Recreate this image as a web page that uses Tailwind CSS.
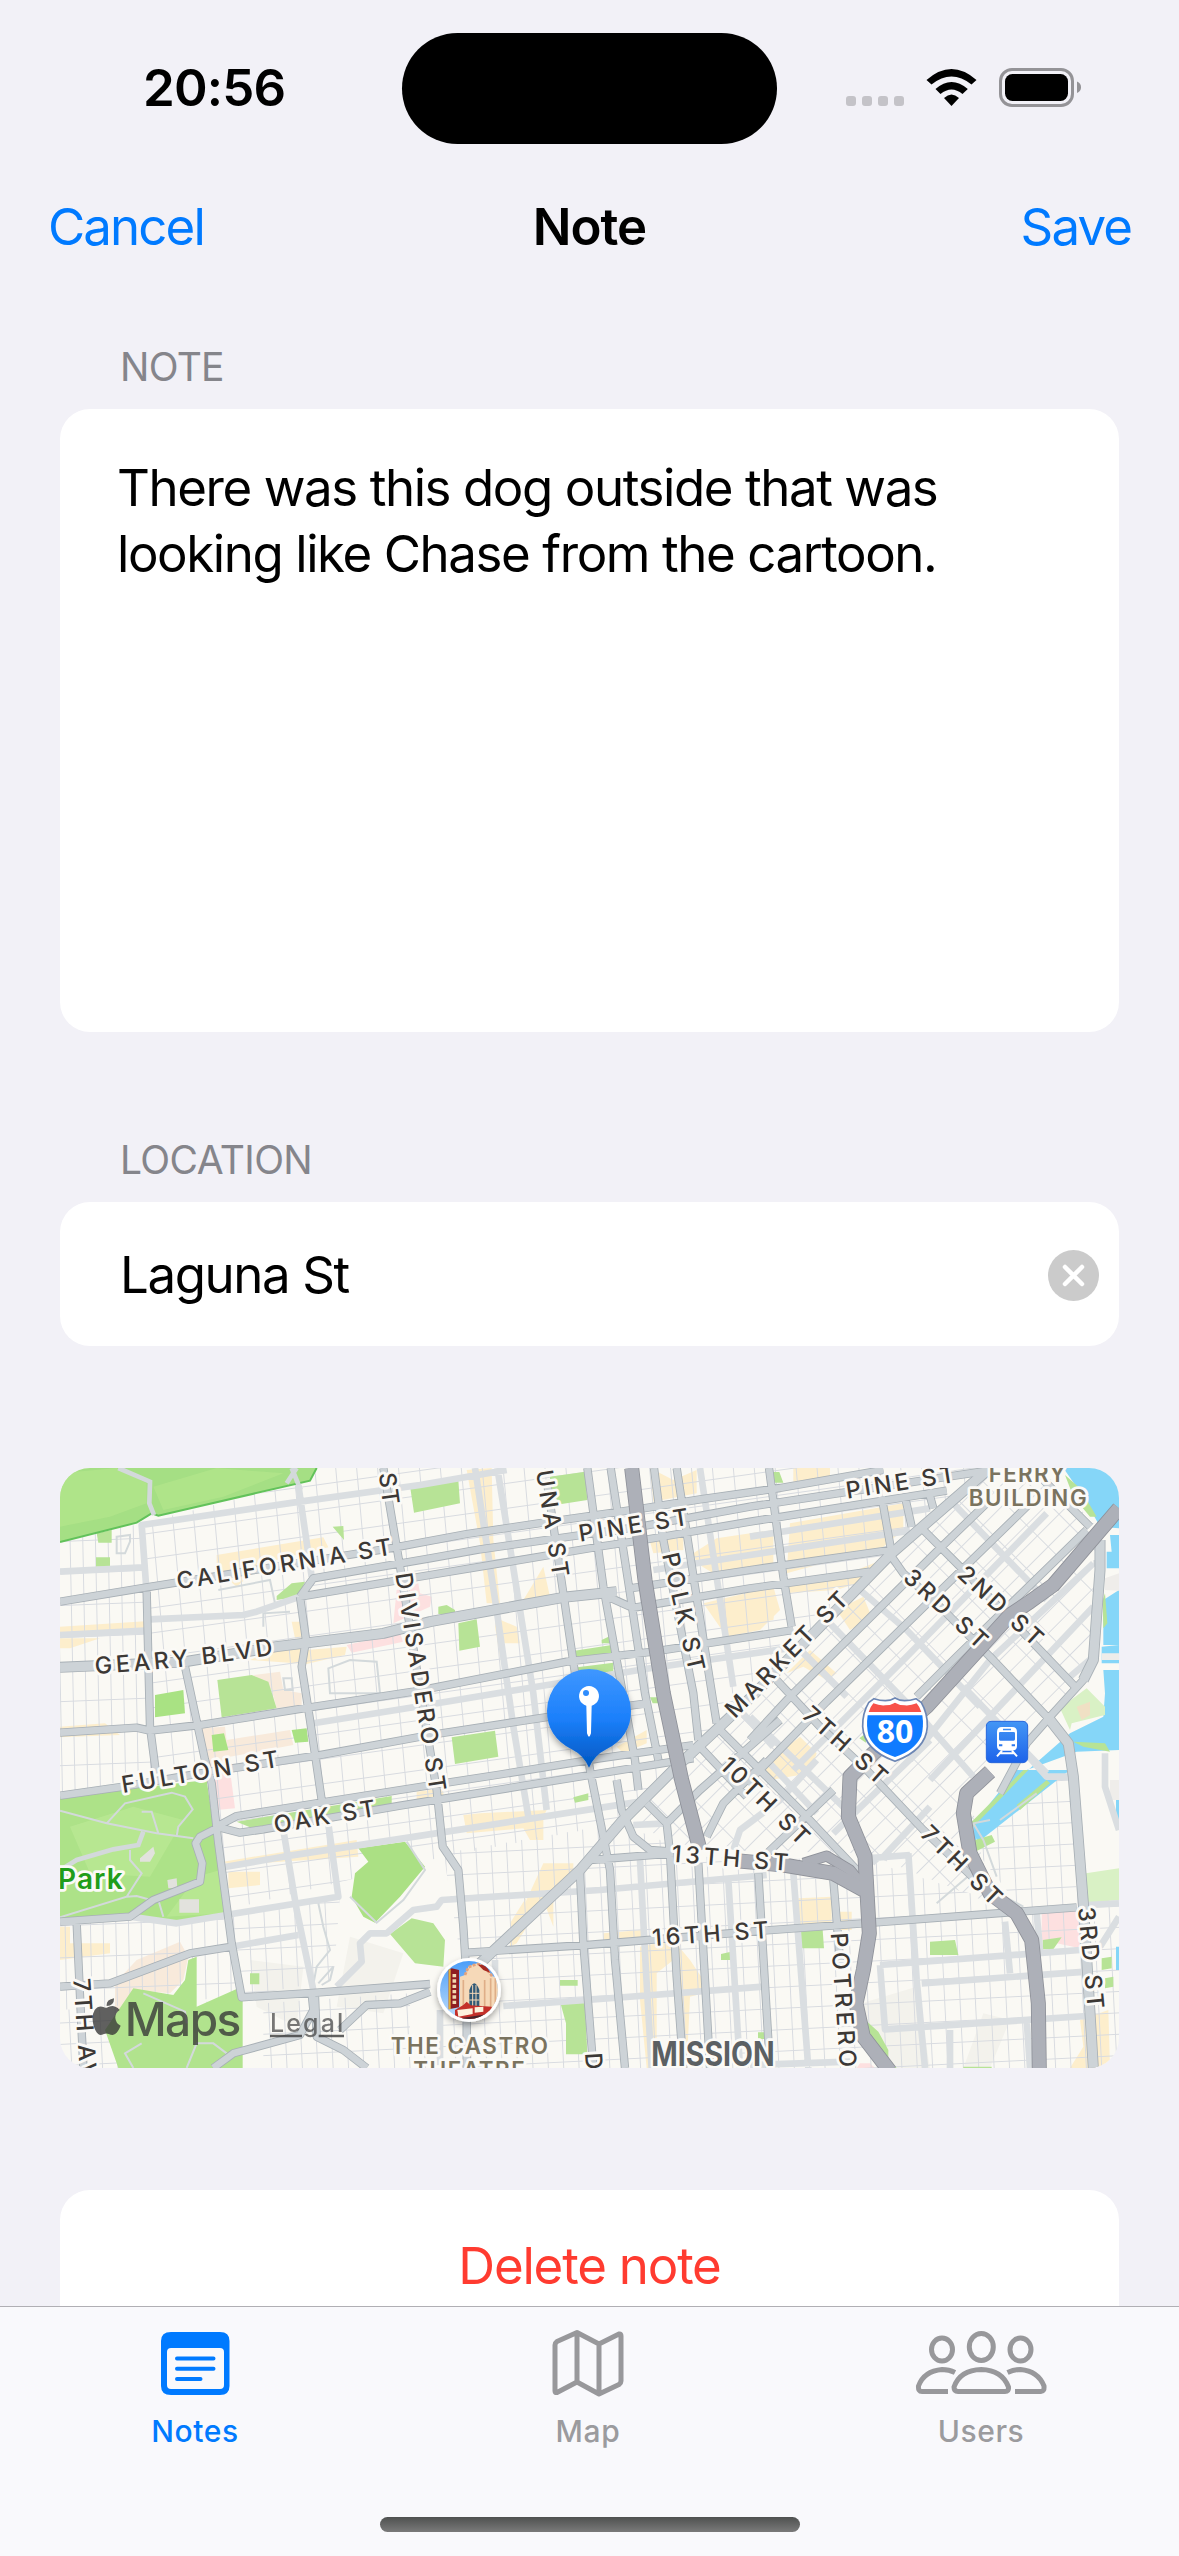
<!DOCTYPE html>
<html lang="en">
<head>
<meta charset="utf-8">
<title>Note</title>
<script src="https://cdn.jsdelivr.net/npm/@tailwindcss/browser@4"></script>
</head>
<body class="w-[1179px] h-[2556px] overflow-hidden bg-[#f2f1f7] text-black font-[Inter,'Liberation_Sans',sans-serif] text-[51px] flex flex-col">

<!-- Status bar -->
<header class="h-[177px] shrink-0 flex items-start pl-[143px] pr-[96px]">
  <div class="w-[259px] pt-[57px] leading-[62px] font-semibold tracking-[-0.8px]">20:56</div>
  <div class="mt-[33px] w-[375px] h-[111px] rounded-full bg-black"></div>
  <div class="flex-1 flex justify-end items-start pt-[66px]">
    <svg class="w-[238px] h-[42px]" viewBox="845 66 238 42">
      <g fill="#c4c3c8"><rect x="846" y="96" width="10" height="10" rx="3"/><rect x="862" y="96" width="10" height="10" rx="3"/><rect x="878" y="96" width="10" height="10" rx="3"/><rect x="894" y="96" width="10" height="10" rx="3"/></g>
      <path d="M926.500 80Q951.500 58 976.500 80L971.500 84.500Q951.500 68.500 931.500 84.500ZM935.500 89Q951.500 75 967.800 89L962.500 94Q951.500 85 940.500 94ZM944 98Q951.500 91 959 98L951.500 106Z"/>
      <rect x="1000.500" y="69.500" width="72" height="36" rx="11.500" fill="none" stroke="#949397" stroke-width="3"/>
      <rect x="1005" y="74" width="63" height="27" rx="7.500"/>
      <path d="M1077 81.500Q1081 83 1081 87.300T1077 93Z" fill="#949397"/>
    </svg>
  </div>
</header>

<!-- Navigation bar -->
<nav class="h-[132px] shrink-0 px-[48px] pt-[19px] grid grid-cols-3 items-start leading-[62px]">
  <span class="text-[#007aff] tracking-[-1.9px]">Cancel</span>
  <span class="text-center font-semibold tracking-[-1px]">Note</span>
  <span class="text-right text-[#007aff] tracking-[-1.9px]">Save</span>
</nav>

<main class="px-[60px] flex-1 flex flex-col">
  <h2 class="pl-[60px] mt-[34px] h-[66px] leading-[48px] text-[39px] text-[#85858b] tracking-[-0.7px]">NOTE</h2>
  <section class="h-[623px] shrink-0 rounded-[30px] bg-white pl-[57px] pt-[46px] leading-[66px] tracking-[-1.42px] whitespace-nowrap">There was this dog outside that was<br>looking like Chase from the cartoon.</section>

  <h2 class="pl-[60px] mt-[104px] h-[66px] leading-[48px] text-[39px] text-[#85858b] tracking-[-0.6px]">LOCATION</h2>
  <section class="h-[144px] shrink-0 rounded-[30px] bg-white pl-[60px] pr-[20px] flex items-center justify-between">
    <span class="leading-[62px] tracking-[-1.4px] pt-[2px]">Laguna St</span>
    <svg class="w-[51px] h-[51px] mt-[2px]" viewBox="0 0 51 51"><circle cx="25.500" cy="25.500" r="25.500" fill="#cbcbcb"/><path d="M17 17L34 34M34 17L17 34" stroke="#fff" stroke-width="4.500" stroke-linecap="round"/></svg>
  </section>

  <!-- Map -->
  <section class="mt-[122px] h-[600px] shrink-0 rounded-[30px] overflow-hidden">
    <svg class="block w-[1059px] h-[600px]" viewBox="30 24 3177 1800">
      <defs>
        <pattern id="west" width="62" height="74" patternUnits="userSpaceOnUse" patternTransform="matrix(1 -.14 .09 1 40 30)"><path d="M0 0H62M0 0V74" stroke="#d8dbe0" stroke-width="6" fill="none"/></pattern>
        <pattern id="far" width="38" height="96" patternUnits="userSpaceOnUse" patternTransform="matrix(1 -.04 .02 1 55 50)"><path d="M0 0H38M0 0V96" stroke="#d8dbe0" stroke-width="6" fill="none"/></pattern>
        <pattern id="south" width="46" height="64" patternUnits="userSpaceOnUse" patternTransform="matrix(1 -.05 .05 1 20 20)"><path d="M0 0H46M0 0V64" stroke="#d8dbe0" stroke-width="6" fill="none"/></pattern>
        <pattern id="soma" width="92" height="46" patternUnits="userSpaceOnUse" patternTransform="rotate(-45)"><path d="M0 0H92M0 0V46" stroke="#d8dbe0" stroke-width="6" fill="none"/></pattern>
        <linearGradient id="pin" x1="0" y1="0" x2="0" y2="1"><stop offset="0" stop-color="#3f97ff"/><stop offset=".5" stop-color="#1c80fb"/><stop offset="1" stop-color="#0056c0"/></linearGradient>
        <linearGradient id="train" x1="0" y1="0" x2="0" y2="1"><stop offset="0" stop-color="#4396f5"/><stop offset="1" stop-color="#1d63ea"/></linearGradient>
        <linearGradient id="sky" x1="0" y1="0" x2="0" y2="1"><stop offset="0" stop-color="#4a9df8"/><stop offset="1" stop-color="#c5e0fb"/></linearGradient>
        <clipPath id="castro"><circle cx="1257" cy="1590" r="87"/></clipPath>
        <filter id="shadow" x="-30%" y="-30%" width="160%" height="170%"><feDropShadow dx="0" dy="10" stdDeviation="9" flood-color="#000" flood-opacity=".35"/></filter>
        <path id="arterials" d="M30 425L290 382L1020 265L1250 222L1480 188L1780 145L1950 118L2190 84L2500 30M750 410L790 355L1140 295L1290 268L1770 200L2100 140L2660 55L2800 34M750 410L1140 345L1380 305L1660 258L1780 240L2100 185L2690 92M290 395L300 800L318 940M405 620L465 900L485 970L505 1150L545 1450L575 1612L800 1598L1140 1572M1000 24L1050 320L1145 900L1160 990L1178 1160L1225 1230L1240 1400L1250 1560M750 410L768 540L755 620L780 780L815 1020M1490 60L1540 400L1575 640L1620 930L1680 1230L1695 1500L1725 1824M1612 24L1660 380L1700 600L1755 900L1765 990M1682 24L1740 400L1785 700L1825 900M1812 24L1840 240L1930 700L1945 840M1880 24L1935 380L2000 790M2157 24L2200 350L2225 500M2495 110L2525 280M2565 110L2585 200M2635 90L2650 145M1640 395L1740 440M1740 385L2100 330L2520 270M1740 445L2100 385L2460 335M30 818L260 803L300 812L450 795L780 742L1090 695L1550 605L1810 575L2230 510M30 1007L220 980L480 935L800 887L1140 825L1500 770L1790 730M500 1100L560 1068L1050 990L1340 945L1650 895L1930 855M500 1100L570 1118L640 1108L1050 1037L1620 945L1930 895M30 1385L240 1370L310 1320L450 1265L457 1210L437 1150L450 1130L500 1105M80 1390L100 1824M30 1580L180 1570L420 1480L545 1460M490 1824L550 1780L750 1725L790 1650L785 1600M795 1610L800 1730L880 1770L950 1824M870 1710L950 1635L1050 1630L1140 1595M1250 1478L1610 1455L2150 1411L2440 1390L3080 1342M1590 1240L1600 1450L1630 1824M1620 1200L1870 1180M1700 960L1715 1050L1750 1130L1800 1170L1870 1175M1850 1090L1860 1180L1880 1550L1900 1824M1945 1210L1980 1824M2125 1240L2160 1824M2350 1260L2370 1500M1250 1600V1824M2100 840L2220 710L2670 265L2820 120M2090 970L2330 725L2940 130M2600 710L2720 590L3110 210M2850 1000L2930 850L3000 770L3100 660L3130 600L3150 330V240M2610 200L2740 330L3075 680M2525 290L2560 340L2660 430L2820 590L3000 780M2970 50L3120 200M2180 660L2310 800L2450 930L2620 1110L2850 1330M2000 800L2260 1060L2430 1240M1940 850L2090 1010M1790 1030L1850 1090L1950 990L2190 780M1970 1130L2020 1030L2150 900M2120 1210L2350 990"/>
        <path id="boulevards" d="M30 622L400 606L680 560L1000 520L1140 485L1540 412L1700 395M2820 24L2525 280L2100 715L1870 930L1715 1085L1590 1230L1290 1510M3000 780L3055 850L3070 950L3100 1330L3130 1824M3150 240V330L3130 600L3100 660"/>
        <path id="ramp" d="M2260 1210L2330 1188L2400 1230L2450 1290"/>
        <path id="freeways" d="M1745 24L1785 360L1840 700L1895 960L1950 1170M3207 145L3010 375L2940 425L2880 465L2630 740L2470 880L2400 950L2395 1070L2445 1190L2458 1420L2440 1530L2418 1630L2440 1730L2520 1834M2820 935L2750 1000L2740 1060L2760 1180L2820 1300L2900 1360L2945 1440L2965 1630L2968 1834M2060 1202L2200 1215L2350 1240L2440 1290"/>
        <path id="geary" d="M136 642Q400 626 680 583"/>
      </defs>
      <rect x="30" y="24" width="3177" height="1800" fill="#faf9f4"/>
      <path d="M2400 1640L2600 1580L2640 1824H2480ZM2800 1660L2880 1680L2820 1824H2740ZM600 1500L760 1520L740 1700L620 1640ZM900 1430L1060 1480L1000 1660L860 1640Z" fill="#f3f2ec"/>

      <!-- Commercial districts -->
      <path fill="#fdeecc" d="M500 285L820 232L835 262L640 310L560 380L500 330ZM30 500L285 484V510L30 530ZM30 535H150L60 565H30ZM665 570L770 560V612L600 600ZM725 485L755 485V535H735ZM770 570L890 560L885 585L770 612ZM30 800L165 790L210 825L30 832ZM1250 30L1325 24L1330 240L1350 430L1310 430L1290 250ZM1420 420L1480 320L1500 410L1420 425ZM1340 475L1400 500L1410 550L1350 550L1350 590L1335 500ZM1800 24L1870 60L1940 30V100L1810 125ZM1800 245L1900 232V270L1810 280ZM1930 280L2000 235L2170 210V320L1990 340L1940 310ZM1960 430L2170 380L2190 450L2130 510L2030 530ZM2230 24L2340 24V50L2230 65ZM2220 190L2560 130V210L2500 260L2210 340ZM2200 370L2420 330L2520 290L2420 370L2360 390L2200 400ZM2110 430L2180 420L2170 480L2110 490ZM2360 450L2440 410L2465 470L2400 510ZM2210 640L2280 570L2360 640L2330 660L2260 620ZM2130 920L2250 830L2300 880L2280 940L2160 960ZM520 1205L920 1140L925 1190L540 1215ZM535 1235L630 1235V1275L535 1285ZM1240 1065L1290 1060L1490 1050L1480 1070L1480 1140L1440 1140L1420 1105L1250 1120ZM1480 1210H1570V1260L1510 1310V1400L1480 1320L1400 1450L1380 1460V1390L1430 1310L1425 1330ZM1660 1420L1775 1410V1430L1660 1440ZM1770 1460L1870 1440L1920 1500L1960 1560V1600L1920 1610L1910 1824H1890V1620L1870 1500L1820 1540V1824H1790L1770 1620ZM2245 1315L2345 1310V1390L2245 1395ZM2370 1355L2405 1355V1410H2370ZM3090 1680L3175 1650L3180 1824H3060L3100 1760ZM30 1400L60 1400V1450L180 1450V1480L30 1500ZM1100 995L1180 985V1020L1100 1025ZM1700 860L1790 810V850L1720 880Z"/>
      <path fill="#f8eadb" d="M610 645L690 635L700 690L755 700V735L680 745L665 690ZM455 805L525 800L530 840L720 810L730 855L540 890L550 945L480 940ZM195 1570L260 1500L390 1445L415 1490L400 1560L360 1600L250 1590L220 1700L195 1640Z"/>
      <path fill="#fde0e0" d="M1040 390L1105 370L1110 400L1145 410L1140 440L1030 490ZM890 555L1050 520L1060 545L905 578ZM485 950L540 930L555 1045L500 1050ZM2975 1360L3085 1350L3090 1465L2975 1440ZM2430 1810L2460 1810L2475 1824H2420Z"/>

      <!-- Residential streets -->
      <path fill="url(#far)" d="M30 240L280 190L300 800L320 940L30 1005ZM30 1390L520 1370L570 1610L30 1650Z"/>
      <path fill="url(#west)" d="M275 190L790 60L800 24H2790L2380 440L1710 1090L1180 1190L530 1350L460 930L320 940L290 400Z"/>
      <path fill="url(#south)" d="M540 1370L870 1310L850 1560L575 1610ZM1180 1180L1710 1090L1950 1190L2450 1200L2760 1300H3000L3207 1280V1824H1050L1250 1600ZM2950 940H3070L3080 1330H2900L2760 1150ZM30 1650L560 1620V1824H30ZM640 1630L1080 1600V1824H640Z" />
      <path fill="url(#soma)" d="M2790 24L3010 60L3140 200L3120 630L2980 800L2760 1000L2820 1330L2450 1180L1950 1170L1715 1085L2380 440Z"/>

      <!-- Water -->
      <path fill="#85d6f8" d="M3040 24H3207V205L3150 200L3100 110ZM3180 225H3207V325H3170V275H3185ZM3160 420L3207 390V555H3160ZM3155 560L3207 555V610H3155ZM3160 630H3207V870L3080 875L2930 930L2770 1150L2770 1090L2900 960L3060 820L3160 770L3165 700Z"/>
      <path fill="#85d6f8" d="M2900 930H3060L2780 1150V1080ZM3198 1010H3207V1100H3198ZM3198 1460H3207V1530H3198Z"/>
      <path fill="#efedea" d="M3165 355L3207 340V392L3165 390ZM3155 580H3207V600H3155ZM3180 960H3207V1020H3180Z"/>

      <!-- Parks -->
      <g fill="#b7e396">
        <path d="M30 24H800L780 62L325 167L305 160L260 188L30 246Z" fill="#a5df84"/>
        <path d="M30 40L200 24L290 70V130L180 170L30 200ZM310 80L500 24L700 40L520 110L340 150Z" fill="#b3e58c" opacity=".7"/>
        <path d="M140 220L185 210V248H145ZM138 292H180V320H138ZM848 200L880 198L882 240ZM725 370L765 365L745 410L680 420V408ZM1080 78L1225 60L1230 130L1092 158ZM1500 50L1605 35L1612 120L1535 132L1500 100ZM1165 440L1190 435L1215 450V462H1165ZM1225 490L1280 478L1290 560L1228 572ZM1574 572L1685 555L1688 585L1578 605ZM1655 540L1680 528V550H1655ZM1582 622L1690 608V635L1580 640ZM1205 832L1335 812L1345 890L1215 912ZM1800 712H1832V730H1808ZM2165 36H2188L2200 68H2165Z"/>
        <path d="M502 660L605 645L655 665L680 745L515 772Z"/><path d="M315 705L400 690L405 760L315 772Z" fill="#a9e283"/>
        <path d="M485 825L522 820L535 870L490 875ZM725 810L770 805L775 845L735 848Z" fill="#a9e283"/>
        <path d="M30 1010L470 960L495 1130L525 1365L380 1385L240 1365L30 1380Z" fill="#ade288"/>
        <path d="M60 1100L250 1040L400 1080L300 1250L120 1240ZM440 1250L510 1230L525 1360L350 1370Z" fill="#bde996" opacity=".65"/>
        <path d="M560 1085L1025 1008V1035L620 1110Z"/>
        <path d="M925 1165L1065 1145L1125 1220L1050 1310L975 1388L940 1370L905 1310L915 1240L955 1205Z" fill="#abe084"/>
        <path d="M1020 1422L1085 1375L1150 1390L1185 1440L1180 1520L1095 1510ZM600 1540H628V1573H600Z"/>
        <path d="M165 1710L250 1585L370 1605L405 1560L415 1500L440 1490V1640L558 1588L578 1600V1824H205Z" fill="#b1e38d"/>
        <path d="M1570 1012L1615 1000V1020L1575 1028ZM1530 1560H1583V1577H1530ZM1532 1632L1605 1625L1612 1783H1548V1690ZM2013 1482L2043 1475V1500H2013ZM2124 1717H2147V1737H2124ZM2250 1412L2318 1410L2322 1465H2255ZM2640 1445L2715 1440L2725 1485H2640ZM2435 1670L2485 1715L2515 1770V1800L2540 1824H2520L2430 1750ZM2740 1820H2825V1824H2740ZM2978 1440L3035 1432L3010 1468H2978ZM3155 1495L3185 1490V1525L3155 1530ZM3165 1555L3190 1550V1580L3165 1585ZM2428 835L2448 820V848ZM3070 845L3165 850L3180 875L3100 860ZM2765 1085L2920 930H2935L2770 1100ZM2900 1035L2990 960L3000 970L2910 1050ZM2775 1140L2825 1125L2835 1145L2775 1175ZM3045 45L3090 85L3140 170H3120L3070 110ZM3158 420L3165 400L3172 490L3160 505Z"/>
        <path d="M3030 745L3110 685L3165 740V765L3065 790L3060 810ZM3108 1240L3207 1225V1320L3112 1328Z" fill="#d9f1c5"/>
        <path d="M3080 740L3120 725V765L3095 780Z" fill="#f0e0c4"/>
      </g>
      <path d="M30 246L260 188L305 160L325 167L780 62L800 24" fill="none" stroke="#62c25a" stroke-width="6"/>
      <path fill="#e2e2dd" d="M270 1195L310 1160L315 1180L300 1205L270 1205ZM352 1260L380 1255L382 1285H355ZM388 1318H447V1358H388Z"/>
      <g fill="none" stroke="#d3d9db" stroke-width="6">
        <path d="M30 1052L170 1090L320 1120L430 1135M170 1090L225 1030L365 998L405 1010L428 1048L385 1100L380 1128M275 1055L305 1055L325 1120M240 1170V1200L275 1240L230 1310L30 1372M230 1310L260 1308L295 1318M325 1320L340 1370M280 1600L405 1655L410 1690M275 1750L225 1780L250 1824M410 1824L440 1750L490 1750L530 1780M200 230L240 225V245L225 280L200 280ZM835 625L900 600L980 605L990 700L840 700ZM505 390L660 360L675 430M640 500V460L720 455M700 655H725L728 690H705ZM1070 1145L1125 1230L1060 1320L980 1388L900 1310M785 1600L800 1520L840 1470L820 1400L805 1330M805 1570L850 1520L840 1560L815 1575M2820 1080L2770 1090L2800 1140L2840 1250M2660 1330L2800 1210M2770 1260L2920 1340M2850 1080L2960 1000"/>
        <path d="M205 24L300 65L298 130L312 165M740 24L710 70M725 24L752 90M280 1115L265 1155L190 1168L80 1200L40 1225" stroke-width="14"/>
      </g>

      <!-- Connector streets -->
      <path fill="none" stroke="#dadee1" stroke-width="20" stroke-linejoin="round" d="M290 400L275 195L750 125L1110 75L1370 30M745 75L785 350M30 335L280 322M30 525L285 512M300 478L580 465L620 455L750 410M790 790L1090 742L1400 690L1800 625L2250 560M1275 24L1340 450L1390 800L1435 1070M1342 24L1450 700L1490 1050M1950 24L2050 680M1810 330L2100 285L2580 212M2100 230L2640 145M520 1222L700 1190L1060 1135L1770 1025M700 1110L740 1350L790 1590M835 1090L865 1310L545 1362M545 1460L745 1425M240 1370L380 1390L530 1365M860 1580L935 1505L930 1450L960 1420L1010 1420L1090 1350L1160 1340L1175 1320L1650 1290L2150 1245M1360 1638L1610 1620L2140 1580M1770 1200L1790 1570L1805 1824M2035 1260L2070 1824M2230 1240L2275 1824M2575 1180L2600 1560L2625 1824M2490 1515L2505 1708L3110 1668M2490 1515L3090 1470M2615 1570L3110 1535M2865 1385L2880 1540M2960 1360L2970 1470M2700 1710V1824M2930 1680L2940 1824M2100 1815L2400 1805M1750 1095L1850 1090M1170 1650V1824M1335 1500V1600M2700 120L2990 420M2430 390L2570 510L2790 740M2340 490L2630 790L2770 950M2250 570L2390 710M2230 930L2580 580L2990 160M2580 900L2820 600L3130 310M2640 960L3130 440M2740 680L2990 940M2350 1120L2640 840M2100 770L2400 1060M2500 1190L2640 1040M2050 1170L2070 1110L2190 1020L2300 900M2450 1195L2580 1185M2900 850L2990 950H3060M3165 880V980L3207 1110M3207 1330L3110 1335M3207 1370L3150 1460M2150 900L2300 1060M2060 740L2170 860M3130 310H3160M3060 650L3130 590M2480 1210L2400 1120"/>

      <!-- Arterials and freeways: casing, then surface -->
      <g fill="none" stroke-linejoin="round">
        <g stroke="#a7afb5"><use href="#arterials" stroke-width="25"/><use href="#boulevards" stroke-width="33"/></g>
        <g stroke="#cdd3d7"><use href="#arterials" stroke-width="20"/><use href="#boulevards" stroke-width="28"/></g>
        <g stroke="#8e9199"><use href="#freeways" stroke-width="45"/><use href="#ramp" stroke-width="33"/></g>
        <g stroke="#adb0b8"><use href="#ramp" stroke-width="28"/><use href="#freeways" stroke-width="40"/></g>
      </g>

      <!-- Street labels -->
      <g font-family="Inter, 'Liberation Sans', sans-serif" font-size="70" font-weight="500" fill="#3c3835" stroke="#fbfaf7" stroke-width="17" stroke-linejoin="round" paint-order="stroke">
        <text transform="translate(384 388) rotate(-9.200)" textLength="652">CALIFORNIA ST</text>
        <text textLength="538"><textPath href="#geary" textLength="538">GEARY BLVD</textPath></text>
        <text transform="translate(219 999) rotate(-9.500)" textLength="476">FULTON ST</text>
        <text transform="translate(676 1119) rotate(-9.500)" textLength="308">OAK ST</text>
        <text transform="translate(986 41) rotate(82)" textLength="96">ST</text>
        <text transform="translate(1036 342) rotate(81)" textLength="662">DIVISADERO ST</text>
        <text transform="translate(1448 -30) rotate(81)" textLength="388">GUNA ST</text>
        <text transform="translate(1590 245) rotate(-8.800)" textLength="332">PINE ST</text>
        <text transform="translate(2392 116) rotate(-8.800)" textLength="330">PINE ST</text>
        <text transform="translate(1836 284) rotate(77)" textLength="362">POLK ST</text>
        <text transform="translate(2055 778) rotate(-45.900)" textLength="494">MARKET ST</text>
        <text transform="translate(2556 358) rotate(42.600)" textLength="313">3RD ST</text>
        <text transform="translate(2718 348) rotate(42.500)" textLength="318">2ND ST</text>
        <text transform="translate(2253 770) rotate(41.700)" textLength="312">7TH ST</text>
        <text transform="translate(2006 920) rotate(44.300)" textLength="342">10TH ST</text>
        <text transform="translate(2608 1126) rotate(44.300)" textLength="307">7TH ST</text>
        <text transform="translate(1864 1205) rotate(4.500)" textLength="350">13TH ST</text>
        <text transform="translate(1808 1458) rotate(-4)" textLength="350">16TH ST</text>
        <text transform="translate(3084 1343) rotate(84.500)" textLength="306">3RD ST</text>
        <text transform="translate(2342 1420) rotate(86)" textLength="404">POTRERO</text>
        <text transform="translate(70 1557) rotate(86)" textLength="356">7TH AVE</text>
        <text transform="translate(1605 1780) rotate(86)">D</text>
        <g fill="#7a735f" font-size="67" font-weight="600">
          <text x="2816" y="66" textLength="230">FERRY</text><text x="2756" y="138" textLength="354">BUILDING</text>
          <text x="1022" y="1783" textLength="472">THE CASTRO</text><text x="1090" y="1853" textLength="334">THEATRE</text>
        </g>
        <text x="24" y="1287" font-size="84" font-weight="600" fill="#219d1a" textLength="194">Park</text>
        <text x="1804" y="1818" font-size="101" font-weight="700" fill="#5b6063" textLength="370" lengthAdjust="spacingAndGlyphs">MISSION</text>
      </g>

      <!-- Attribution -->
      <g fill="#363636" opacity=".78" font-family="Inter, 'Liberation Sans', sans-serif">
        <path d="M170 1643Q185 1635 196 1640Q204 1643 209 1650Q195 1659 196 1674Q197 1690 212 1697Q200 1725 188 1725Q182 1725 176 1722Q169 1719 162 1722Q156 1725 150 1725Q139 1722 131 1698Q123 1668 134 1650Q145 1636 160 1641Q166 1644 170 1643ZM170 1638Q168 1619 192 1615Q193 1636 170 1638Z"/>
        <text x="224" y="1728" font-size="138" font-weight="500" textLength="350">Maps</text>
        <text x="660" y="1716" font-size="75" font-weight="500" opacity=".85" textLength="220">Legal</text>
        <path d="M660 1724H756V1732H660ZM806 1724H882V1732H806Z"/>
      </g>

      <!-- Theatre landmark -->
      <g filter="url(#shadow)"><circle cx="1257" cy="1590" r="96" fill="#fff"/></g>
      <g clip-path="url(#castro)">
        <rect x="1160" y="1500" width="200" height="190" fill="url(#sky)"/>
        <path d="M1230 1590V1550L1245 1545L1255 1520L1275 1512Q1290 1505 1300 1520L1318 1535L1325 1548L1350 1555V1690H1230Z" fill="#f6d9b8"/>
        <path d="M1245 1545L1255 1522L1275 1514Q1290 1507 1300 1522L1318 1537L1328 1552" fill="none" stroke="#e3a27c" stroke-width="8" stroke-dasharray="9 4"/>
        <path d="M1284 1514Q1310 1512 1320 1538L1300 1530Z" fill="#a62a22"/>
        <path d="M1258 1640V1590Q1273 1550 1288 1590V1640Z" fill="#315a77"/><path d="M1268 1575V1640M1278 1575V1640M1258 1600H1288M1258 1620H1288" stroke="#f6d9b8" stroke-width="3"/>
        <path d="M1304 1560V1650M1322 1555V1650M1336 1555V1650M1240 1560V1640" stroke="#dfae88" stroke-width="5"/>
        <path d="M1196 1530L1205 1525L1227 1530V1642L1196 1648Z" fill="#8f1d20"/><path d="M1199 1528V1648" stroke="#e3b23c" stroke-width="6"/>
        <path d="M1213 1542V1636" stroke="#f2d9b0" stroke-width="11" stroke-dasharray="10 6"/>
        <path d="M1215 1650L1240 1635L1250 1625L1262 1636L1325 1640L1330 1665L1240 1690L1215 1672Z" fill="#c4302a"/>
        <path d="M1222 1650L1268 1645V1662L1225 1670ZM1274 1642L1300 1640V1655L1274 1658Z" fill="#fdf2dd"/><path d="M1220 1676L1300 1664L1330 1655V1690H1220Z" fill="#472329"/>
      </g>

      <!-- Interstate shield -->
      <path d="M2472 716Q2490 722 2506 722Q2522 722 2535 714Q2548 722 2564 722Q2580 722 2598 716L2614 728Q2633 760 2632 800Q2628 870 2535 904Q2442 870 2438 800Q2437 760 2456 728Z" fill="#fff" stroke="#6c86b4" stroke-width="5"/>
      <path d="M2470 730Q2490 738 2506 736Q2522 736 2535 728Q2548 736 2564 736Q2580 738 2600 730Q2610 742 2614 756H2456Q2460 742 2470 730Z" fill="#f8524a"/>
      <path d="M2453 766H2617Q2622 800 2614 828Q2594 872 2535 891Q2476 872 2456 828Q2448 800 2453 766Z" fill="#0f7bff"/>
      <text x="2535" y="848" text-anchor="middle" font-family="'Noto Sans', 'Open Sans', sans-serif" font-size="96" font-weight="700" fill="#fff">80</text>

      <!-- Station -->
      <rect x="2809" y="784" width="124" height="124" rx="14" fill="url(#train)" stroke="#2767dc" stroke-width="3"/>
      <path fill="#fff" fill-rule="evenodd" d="M2856 801H2886Q2901 801 2901 816V858Q2901 872 2886 872H2856Q2841 872 2841 858V816Q2841 801 2856 801ZM2850 816Q2847 816 2847 820V838Q2847 842 2851 842H2891Q2895 842 2895 838V820Q2895 816 2891 816ZM2859 806V811H2883V806ZM2847 853V859H2857V853ZM2885 853V859H2895V853Z"/>
      <path d="M2856 872L2841 889M2886 872L2901 889M2851 880H2891" stroke="#fff" stroke-width="6"/>

      <!-- Selected place -->
      <g filter="url(#shadow)">
        <path d="M1617 923Q1600 885 1565 868Q1491 830 1491 753A126 126 0 0 1 1743 753Q1743 830 1669 868Q1634 885 1617 923Z" fill="url(#pin)"/>
      </g>
      <path fill="#fff" fill-rule="evenodd" d="M1609 737A30 30 0 1 1 1625 737L1623 820Q1617 840 1611 820ZM1608 690A9 9 0 1 0 1608.100 708A9 9 0 1 0 1608 690Z"/>
    </svg>
  </section>

  <section class="mt-[122px] flex-1 rounded-t-[30px] bg-white text-center pt-[45px] leading-[62px] text-[#ff3b30] tracking-[-1.2px]">Delete note</section>
</main>

<!-- Tab bar -->
<footer class="h-[250px] shrink-0 border-t border-[#b0afb4] bg-[#f9f9fc] flex flex-col items-center">
  <div class="w-full h-[210px] grid grid-cols-3 text-[30px] leading-[36px] font-medium text-[#9b9b9e] tracking-[0.600px]">
    <div class="flex flex-col items-center pt-[16px] gap-[10px] pr-[3px] text-[#007aff]">
      <svg class="w-[80px] h-[80px]" viewBox="155 2323 80 80">
        <path fill="#007aff" fill-rule="evenodd" d="M171 2332H220Q229.500 2332 229.500 2341V2386Q229.500 2395 220 2395H171Q161 2395 161 2386V2341Q161 2332 171 2332ZM171 2348Q167 2348 167 2352V2385Q167 2389 171 2389H220Q224 2389 224 2385V2352Q224 2348 220 2348Z"/>
        <path d="M177 2358.500H213.500M177 2368.700H213.500M177 2379H200.500" stroke="#007aff" stroke-width="4" stroke-linecap="round"/>
      </svg>
      <span>Notes</span>
    </div>
    <div class="flex flex-col items-center pt-[16px] gap-[10px] pr-[3px]">
      <svg class="w-[80px] h-[80px]" viewBox="548 2323 80 80" fill="none" stroke="#98989b" stroke-width="5" stroke-linejoin="round"><path d="M555 2345Q555 2343 557 2341.500L577 2332.500L599 2344L619 2334Q621 2333.500 621 2336V2381Q621 2383 619 2384.500L599 2394L577 2382L557 2392.500Q555 2393 555 2391ZM577 2332.500V2382M599 2344V2394"/></svg>
      <span>Map</span>
    </div>
    <div class="flex flex-col items-center pt-[16px] gap-[10px] pr-[3px]">
      <svg class="w-[140px] h-[80px]" viewBox="911 2323 140 80" fill="none" stroke="#98989b" stroke-width="5" stroke-linejoin="round">
        <ellipse cx="981.300" cy="2347" rx="12" ry="13.500"/><ellipse cx="942" cy="2349.500" rx="10.500" ry="11.500"/><ellipse cx="1020.500" cy="2349.500" rx="10.500" ry="11.500"/>
        <path d="M958 2391.500H1005Q1009 2391.500 1008.500 2387Q1002 2370 981.300 2369.500Q960 2370 954 2387Q954 2391.500 958 2391.500ZM955 2372.500Q949 2369.500 942 2369.500Q924 2371 918.500 2386Q918 2391.500 922 2391.500H948M1007.500 2372.500Q1014 2369.500 1020.500 2369.500Q1038 2371 1044 2386Q1044.500 2391.500 1041 2391.500H1015"/>
      </svg>
      <span>Users</span>
    </div>
  </div>
  <div class="w-[420px] h-[15px] rounded-full bg-linear-to-b from-[#4f5150] to-[#7a7a7a]"></div>
</footer>
</body>
</html>
